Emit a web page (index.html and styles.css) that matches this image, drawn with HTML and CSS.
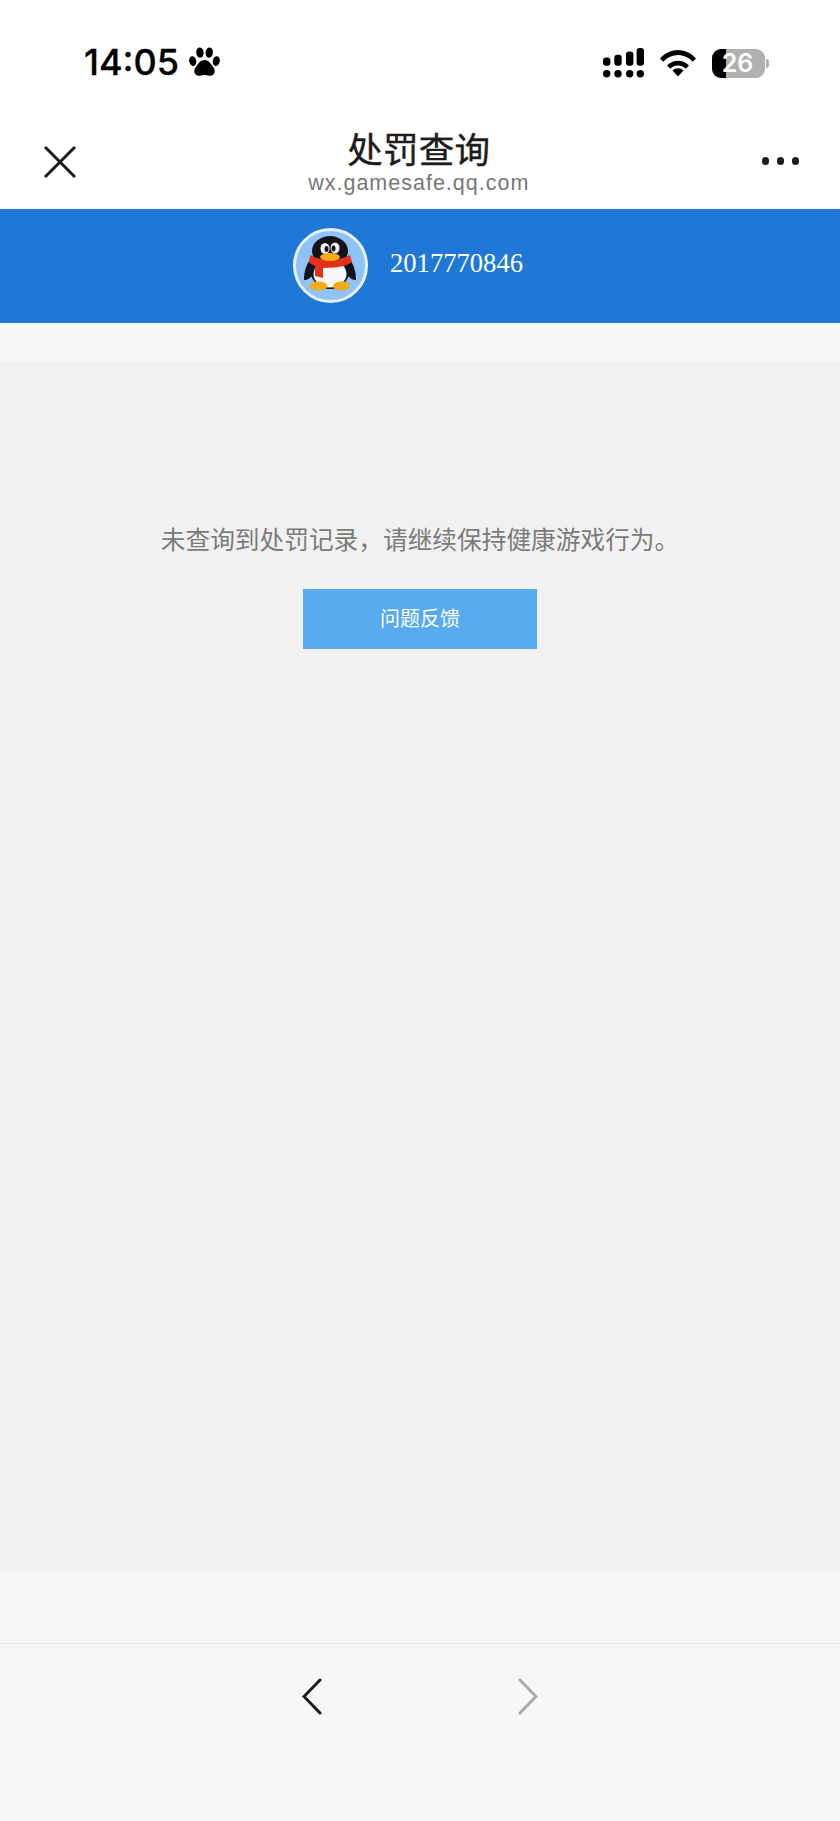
FILE: index.html
```html
<!DOCTYPE html>
<html lang="zh-CN">
<head>
  <meta charset="UTF-8" />
  <title>处罚查询</title>
  <link rel="stylesheet" href="styles.css">
</head>
<body>

<div class="page">
  <!-- Status bar -->
  <div class="status">
    <div class="status-left">
      <span class="time">14:05</span>
      <svg class="paw" viewBox="0 0 30 30" width="31" height="31">
        <ellipse cx="3.600" cy="13.600" rx="3.400" ry="4.800" transform="rotate(-12 3.600 13.600)"/>
        <ellipse cx="10.600" cy="5.400" rx="3.600" ry="5" transform="rotate(-6 10.600 5.400)"/>
        <ellipse cx="19.600" cy="5.400" rx="3.600" ry="5" transform="rotate(6 19.600 5.400)"/>
        <ellipse cx="26.400" cy="13.600" rx="3.400" ry="4.800" transform="rotate(12 26.400 13.600)"/>
        <path d="M15 12.500c3.600 0 5.600 3 7.200 5.200 1.800 2.400 3.200 4.200 2.600 6.800-.6 2.700-3 3.700-5.200 3.300-1.700-.3-3-.8-4.600-.8s-2.900.5-4.600.8c-2.200.4-4.600-.6-5.200-3.300-.6-2.600.8-4.400 2.600-6.800 1.600-2.200 3.600-5.200 7.200-5.200z"/>
      </svg>
    </div>
    <div class="status-right">
      <svg class="signal" viewBox="0 0 41 30" width="41" height="30">
        <rect x="0" y="9.400" width="7.400" height="8.300" rx="3"/>
        <rect x="11.300" y="6.700" width="7.400" height="11" rx="3"/>
        <rect x="23" y="3.400" width="7.400" height="14.300" rx="3"/>
        <rect x="33.600" y="0" width="7.400" height="17.700" rx="3"/>
        <circle cx="3.700" cy="25.700" r="3.700"/>
        <circle cx="15" cy="25.700" r="3.700"/>
        <circle cx="26.700" cy="25.700" r="3.700"/>
        <circle cx="37.300" cy="25.700" r="3.700"/>
      </svg>
      <svg class="wifi" viewBox="0 0 36 28" width="36" height="28">
        <path d="M0 9.500C10-2 26-2 36 9.500l-3.200 3.300C24.500 3.800 11.500 3.800 3.200 12.800z"/>
        <path d="M7 16.500c6-6.500 16-6.500 22 0l-3.300 3.300c-4.200-4.400-11.200-4.400-15.400 0z"/>
        <path d="M12.500 21.500c3-3 8-3 11 0L18 27.500z"/>
      </svg>
      <div class="battery"><span class="battery-level">26</span><i class="battery-nub"></i></div>
    </div>
  </div>

  <!-- Title bar -->
  <div class="nav">
    <svg class="close" viewBox="0 0 32 32" width="32" height="32">
      <path d="M1 1l30 30M31 1L1 31"/>
    </svg>
    <div class="nav-title">
      <div class="title">处罚查询</div>
      <div class="subtitle">wx.gamesafe.qq.com</div>
    </div>
    <div class="more"><i></i><i></i><i></i></div>
  </div>

  <!-- Account banner -->
  <div class="banner">
    <div class="avatar">
      <svg viewBox="0 0 69 69" width="69" height="69">
        <path class="black" d="M15 28C10 33 8 41 8 49c4 0 6-2 9-5zM53 28c5 5 7 13 7 21-4 0-6-2-9-5z"/>
        <ellipse class="black" cx="34" cy="20" rx="18" ry="15"/>
        <ellipse class="black" cx="34" cy="38" rx="20" ry="20"/>
        <ellipse class="white" cx="34" cy="43" rx="16.500" ry="13.500"/>
        <ellipse class="white" cx="29" cy="17.500" rx="4.500" ry="5.500"/>
        <ellipse class="white" cx="39" cy="17" rx="4.500" ry="5.500"/>
        <ellipse class="black" cx="30.500" cy="18" rx="2" ry="3"/>
        <ellipse class="black" cx="37.500" cy="17.500" rx="2" ry="3"/>
        <path class="red" d="M14 24c6 3.500 13 5 20 5s14-1.500 20-5l2 7c-4 3-11 5-17 5.500l-12 .5v10l-8-2v-10c-2-1-4-2-6-3.500z"/>
        <ellipse class="yellow" cx="34" cy="26" rx="10" ry="4"/>
        <ellipse class="yellow" cx="22.500" cy="55" rx="9" ry="4.500"/>
        <ellipse class="yellow" cx="45.500" cy="55" rx="8.500" ry="4.500"/>
      </svg>
    </div>
    <span class="account">2017770846</span>
  </div>

  <div class="band"></div>

  <!-- Result -->
  <div class="result">
    <p class="message">未查询到处罚记录，请继续保持健康游戏行为。</p>
    <a class="feedback">问题反馈</a>
  </div>

  <div class="band-bottom"></div>

  <!-- Browser toolbar -->
  <div class="toolbar">
    <svg class="arrow" viewBox="0 0 20 37" width="20" height="37">
      <path d="M18 2L2 18.500 18 35"/>
    </svg>
    <svg class="arrow arrow-off" viewBox="0 0 20 37" width="20" height="37">
      <path d="M2 2l16 16.500L2 35"/>
    </svg>
  </div>
</div>

</body>
</html>
```

FILE: styles.css
```css
body {
  margin: 0;
  padding: 0;
  font-family: "Noto Sans CJK SC", "Liberation Sans", sans-serif;
  background-color: #f7f7f7;
}

.page {
  width: 840px;
  height: 1821px;
  display: flex;
  flex-direction: column;
  overflow: hidden;
}

/* Status bar */
.status {
  height: 105px;
  box-sizing: border-box;
  padding: 46px 75px 0 84px;
  display: flex;
  justify-content: space-between;
  align-items: flex-start;
  background: #fff;
  color: #000;
}

.status-left {
  display: flex;
  align-items: center;
  gap: 10px;
}

.time {
  font-family: Inter, sans-serif;
  font-size: 36px;
  font-weight: 500;
  line-height: 33px;
  -webkit-text-stroke: 0.3px #000;
}

.paw {
  fill: #000;
}

.status-right {
  display: flex;
  align-items: center;
  padding-top: 2px;
}

.signal {
  fill: #000;
  margin-right: 16px;
}

.wifi {
  fill: #000;
  margin-right: 16px;
}

.battery {
  position: relative;
  width: 53px;
  height: 29px;
  border-radius: 9px;
  background: linear-gradient(to right, #000 14px, #b0b0b0 14px);
  color: #fff;
  font-family: Inter, sans-serif;
  font-size: 25px;
  font-weight: 600;
  line-height: 29px;
  text-align: center;
}

.battery-level {
  margin-left: -2px;
}

.battery-nub {
  position: absolute;
  top: 10px;
  right: -4px;
  width: 3px;
  height: 9px;
  border-radius: 0 3px 3px 0;
  background: #b0b0b0;
}

/* Title bar */
.nav {
  height: 104px;
  box-sizing: border-box;
  padding: 0 41px 0 44px;
  display: flex;
  justify-content: space-between;
  align-items: flex-start;
  background: #fff;
}

.close {
  margin-top: 41px;
  fill: none;
  stroke: #1c1c1c;
  stroke-width: 3;
}

.nav-title {
  margin-top: 21px;
  text-align: center;
}

.title {
  font-size: 35.500px;
  line-height: 44px;
  color: #1c1c1c;
  letter-spacing: 0.3px;
  -webkit-text-stroke: 0.4px #1c1c1c;
}

.subtitle {
  font-family: "Liberation Sans", sans-serif;
  font-size: 21.500px;
  line-height: 26px;
  letter-spacing: 1px;
  color: #777;
}

.more {
  margin-top: 52px;
  display: flex;
  gap: 7.500px;
}

.more i {
  width: 7.500px;
  height: 7.500px;
  border-radius: 50%;
  background: #1c1c1c;
}

/* Account banner */
.banner {
  height: 114px;
  box-sizing: border-box;
  padding: 0 24px 2px 0;
  display: flex;
  align-items: center;
  justify-content: center;
  gap: 22px;
  background: #1f78d6;
}

.avatar {
  width: 69px;
  height: 69px;
  border: 3px solid #e6f1fb;
  border-radius: 50%;
  background: #8fc3f5;
  overflow: hidden;
}

.avatar svg {
  display: block;
  filter: blur(0.6px);
}

.black { fill: #14121a; }
.white { fill: #f7f7f7; }
.yellow { fill: #f4ac12; }
.red { fill: #e5311c; }

.account {
  font-family: "Liberation Serif", serif;
  font-size: 26.600px;
  line-height: 30px;
  margin-bottom: 4px;
  color: #fff;
}

.band {
  height: 39px;
  background: #f7f7f7;
}

/* Result */
.result {
  height: 1211px;
  box-sizing: border-box;
  padding-top: 156px;
  display: flex;
  flex-direction: column;
  align-items: center;
  background: #f1f1f1;
}

.message {
  margin: 0;
  font-size: 24.700px;
  line-height: 40px;
  color: #7b7b7b;
}

.feedback {
  margin-top: 31px;
  width: 234px;
  height: 60px;
  line-height: 58px;
  text-align: center;
  font-size: 20px;
  color: #fff;
  background: #57aaee;
}

.band-bottom {
  height: 70px;
  background: #f7f7f7;
}

/* Browser toolbar */
.toolbar {
  flex: 1;
  box-sizing: border-box;
  border-top: 1px solid #e8e8e8;
  padding: 34px 0 0 302px;
  display: flex;
  align-items: flex-start;
  gap: 196px;
  background: #f7f7f7;
}

.arrow {
  fill: none;
  stroke: #1c1c1c;
  stroke-width: 3;
  stroke-linecap: round;
}

.arrow-off {
  stroke: #aaa;
}
```
